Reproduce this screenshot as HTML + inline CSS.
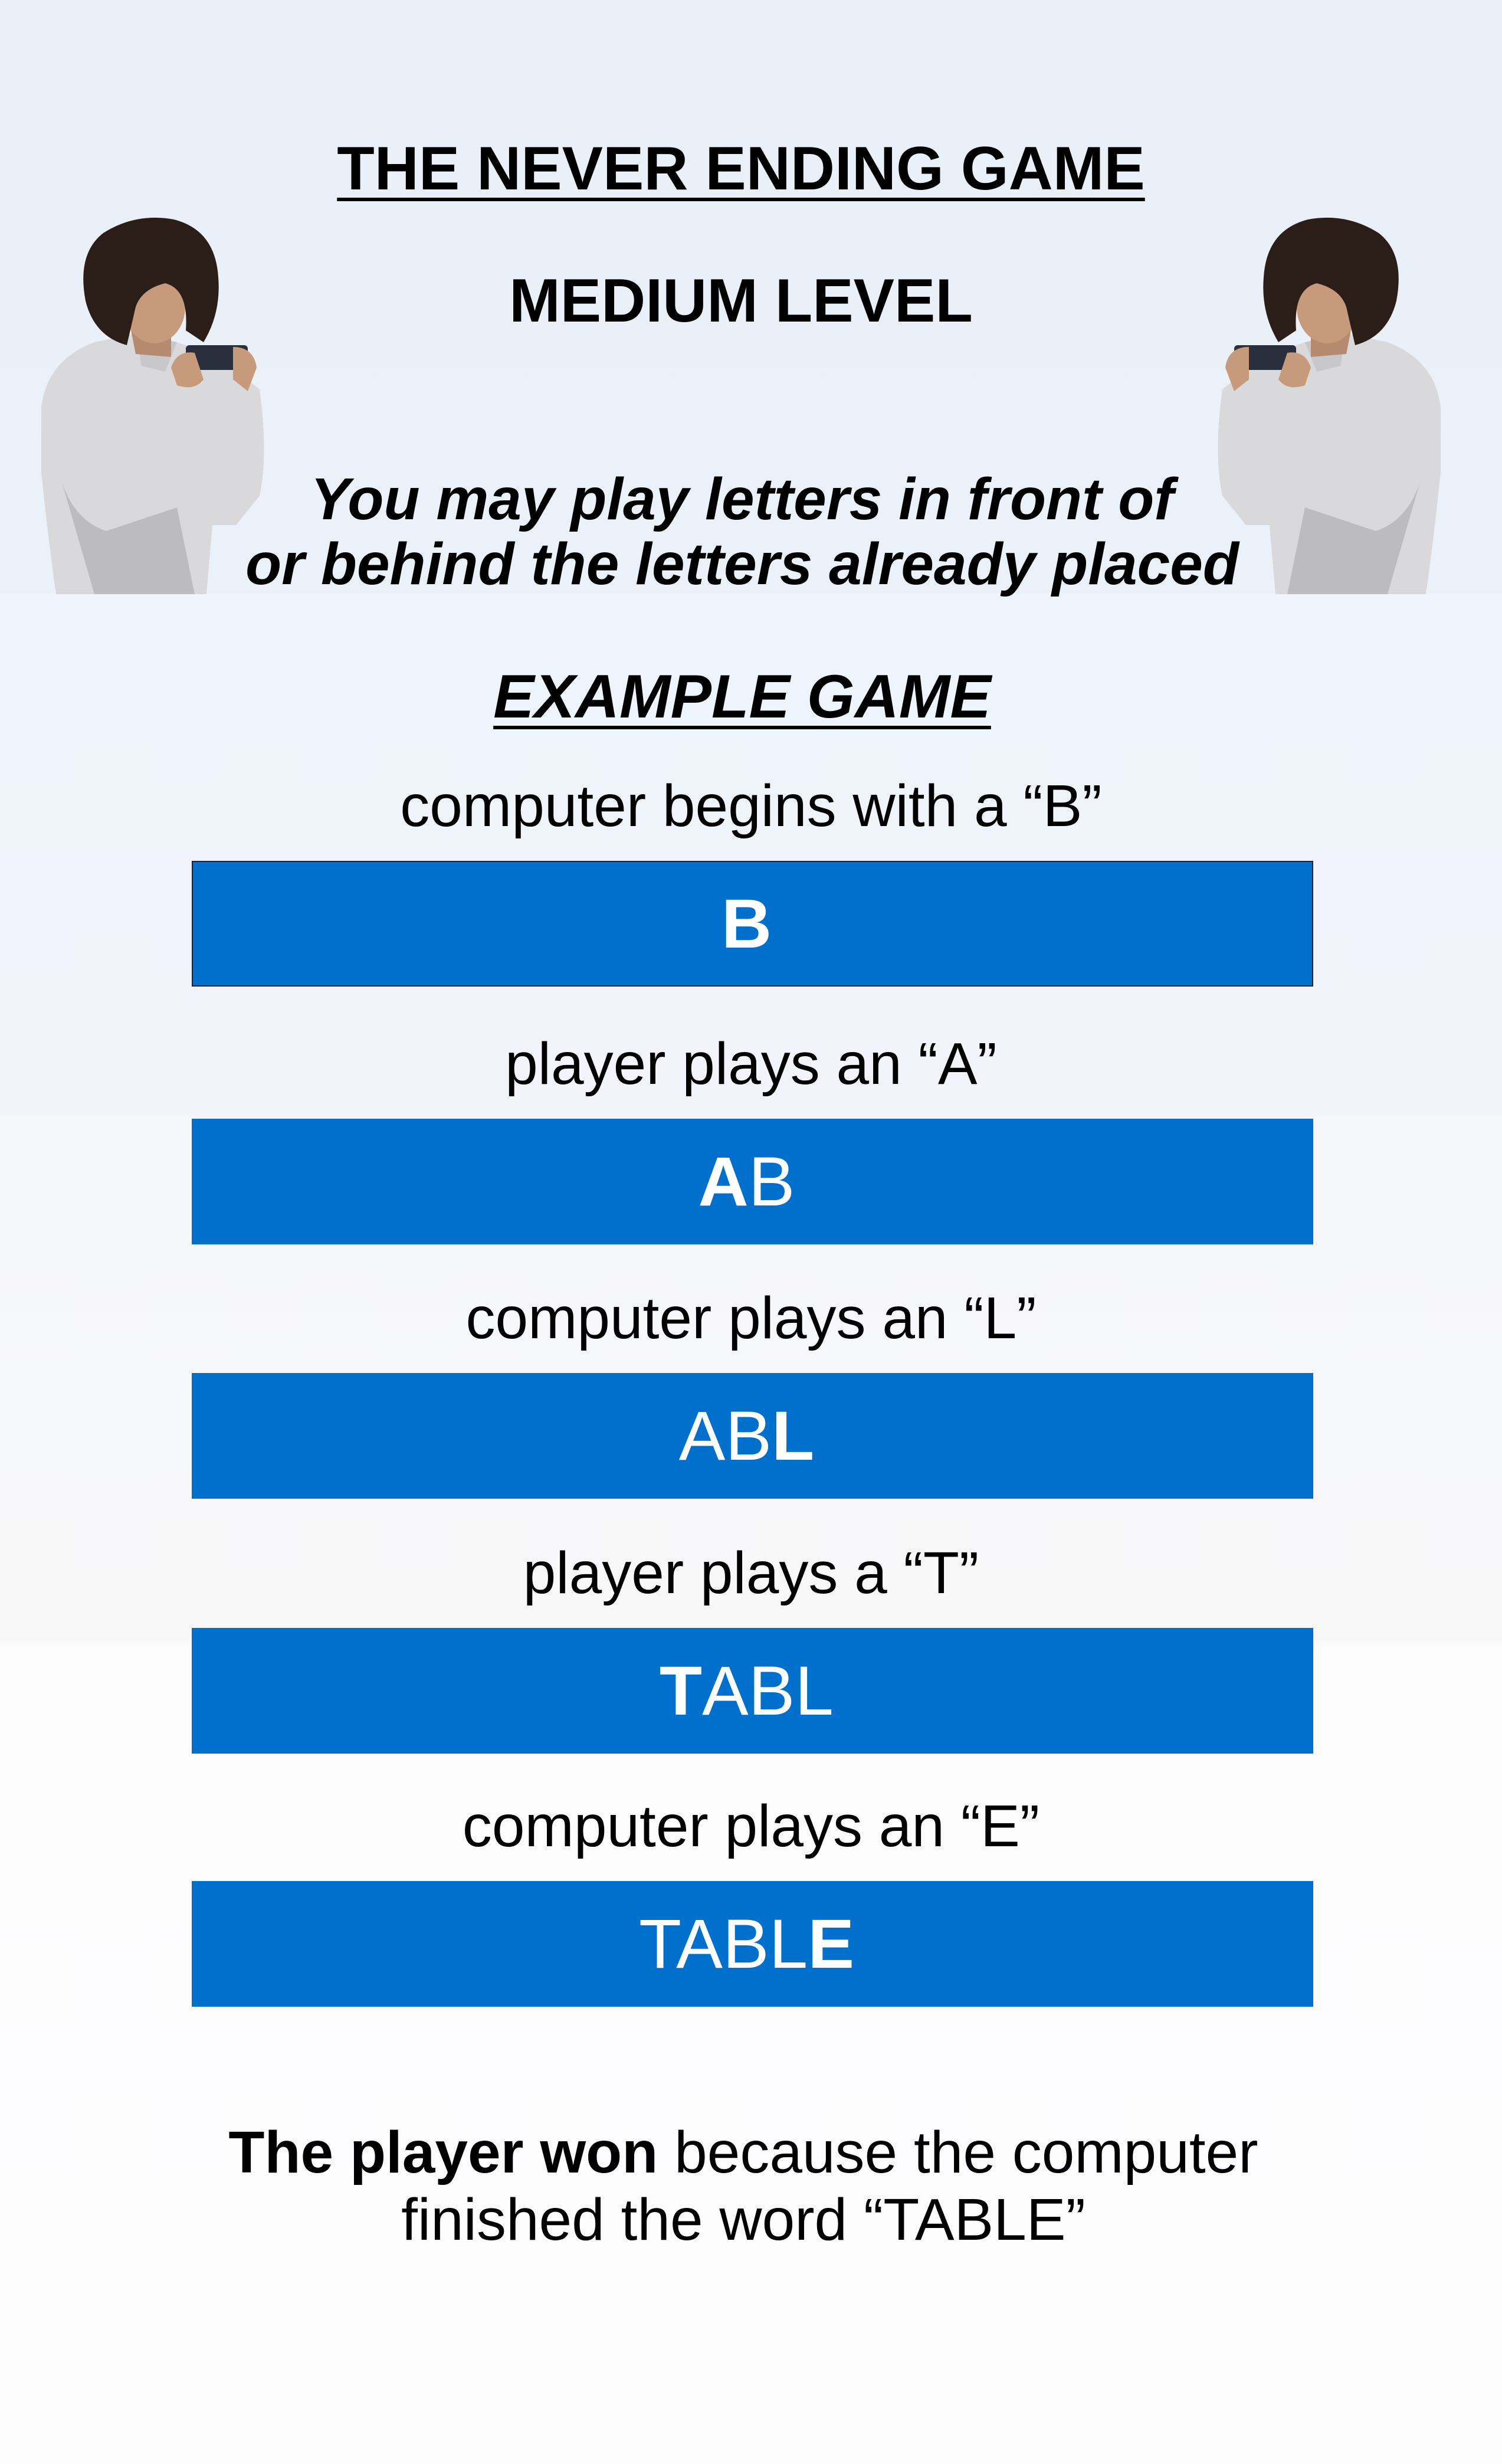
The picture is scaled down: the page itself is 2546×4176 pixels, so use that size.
<!DOCTYPE html>
<html><head><meta charset="utf-8"><style>
html,body{margin:0;padding:0}
body{width:2546px;height:4176px;position:relative;overflow:hidden;font-family:"Liberation Sans",Arial,sans-serif;color:#000;
background:linear-gradient(to bottom,#e9f0f8 0px,#ebf1f9 1005px,#eef4fb 1006px,#eff4fb 1440px,#f1f2fb 1460px,#f2f3fb 1885px,#f6f7fb 1895px,#f8f8f9 2780px,#fcfcfd 2790px,#fdfdfe 4176px);}
.t{position:absolute;left:0;width:2546px;text-align:center;line-height:1;white-space:nowrap}
.u{text-decoration:underline;text-decoration-thickness:6px;text-underline-offset:14px}
.box{position:absolute;left:325px;width:1901px;height:213px;background:#0070cc;color:#fff;display:flex;align-items:center;justify-content:center;font-size:118px;line-height:1}
.box span{position:relative;left:-10px}
.box b{font-weight:bold}
</style></head><body>
<svg width="2546" height="1010" style="position:absolute;left:0;top:0" xmlns="http://www.w3.org/2000/svg">
<defs>
<g id="guy">
<path d="M70 690 Q80 610 160 580 L230 565 L300 580 Q360 600 390 620 L440 660 Q455 770 440 840 L400 890 L360 890 L350 1007 L95 1007 Q80 900 70 800 Z" fill="#d9d9db"/>
<path d="M100 800 Q120 880 180 900 L300 860 L330 1007 L160 1007 Z" fill="#a8a8ab" opacity="0.6"/>
<path d="M230 565 L300 580 L280 630 L240 620 Z" fill="#c8c8cb"/>
<g transform="translate(-10,40)">
<path d="M230 510 L300 520 L300 565 L240 560 Z" fill="#b58a6e"/>
<ellipse cx="272" cy="480" rx="52" ry="62" fill="#c89a7c"/>
<path d="M155 470 Q140 390 185 355 Q240 320 305 332 Q375 350 380 430 Q385 490 355 540 L325 520 Q330 450 290 440 Q250 450 240 480 L225 545 Q170 530 155 470 Z" fill="#2b1d17"/>
</g>
<rect x="315" y="585" width="105" height="42" rx="6" fill="#2a2f3d"/>
<path d="M290 623 Q300 593 330 598 L345 643 Q330 663 300 653 Z" fill="#c89a7c"/>
<path d="M395 588 Q430 588 435 623 L420 663 L395 643 Z" fill="#c89a7c"/>
</g>
</defs>
<use href="#guy"/>
<use href="#guy" transform="translate(2512,0) scale(-1,1)"/>
</svg>
<div class="t u" style="top:234px;font-size:104px;font-weight:bold;left:-17px">THE NEVER ENDING GAME</div>
<div class="t" style="top:458px;font-size:104px;font-weight:bold;left:-17px">MEDIUM LEVEL</div>
<div class="t" style="top:796px;font-size:100px;font-weight:bold;font-style:italic;left:-15px">You may play letters in front of</div>
<div class="t" style="top:906px;font-size:100px;font-weight:bold;font-style:italic;left:-15px">or behind the letters already placed</div>
<div class="t u" style="top:1129px;font-size:104px;font-weight:bold;font-style:italic;left:-15px">EXAMPLE GAME</div>
<div class="t" style="top:1316px;font-size:100px">computer begins with a “B”</div>
<div class="box" style="top:1459px;outline:2px solid #0b2a4a;outline-offset:-2px"><span><b>B</b></span></div>
<div class="t" style="top:1753px;font-size:100px">player plays an “A”</div>
<div class="box" style="top:1896px"><span><b>A</b>B</span></div>
<div class="t" style="top:2184px;font-size:100px">computer plays an “L”</div>
<div class="box" style="top:2327px"><span>AB<b>L</b></span></div>
<div class="t" style="top:2616px;font-size:100px">player plays a “T”</div>
<div class="box" style="top:2759px"><span><b>T</b>ABL</span></div>
<div class="t" style="top:3045px;font-size:100px">computer plays an “E”</div>
<div class="box" style="top:3188px"><span>TABL<b>E</b></span></div>
<div class="t" style="top:3598px;font-size:100px;left:-13px"><b>The player won</b> because the computer</div>
<div class="t" style="top:3712px;font-size:100px;left:-13px">finished the word “TABLE”</div>
</body></html>
